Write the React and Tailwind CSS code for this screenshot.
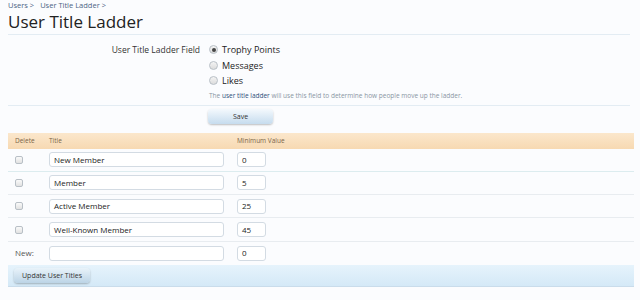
import React from "react";

const rows = [
  { title: "New Member", min: "0" },
  { title: "Member", min: "5" },
  { title: "Active Member", min: "25" },
  { title: "Well-Known Member", min: "45" },
];

function Radio({ checked, label }) {
  return (
    <label className="flex items-center gap-[4px] h-[15.5px] text-[9px] text-[#222]">
      <span className="w-[9px] h-[9px] rounded-full border border-[#b8bfc6] bg-gradient-to-b from-[#f4f4f4] to-[#dcdcdc] flex items-center justify-center">
        {checked && <span className="w-[4px] h-[4px] rounded-full bg-[#444]" />}
      </span>
      {label}
    </label>
  );
}

function Check() {
  return (
    <span className="block w-[8px] h-[8px] rounded-[2px] border border-[#b8bfc6] bg-gradient-to-b from-[#fafafa] to-[#e2e2e2]" />
  );
}

function Field({ value, className }) {
  return (
    <div
      className={`h-[15px] bg-white border border-[#d3dbe3] rounded-[3px] flex items-center px-[4px] text-[8px] text-[#222] ${className}`}
    >
      {value}
    </div>
  );
}

export default function App() {
  return (
    <div
      className="w-[640px] h-[300px] bg-[#fbfcfe] px-2 overflow-hidden"
      style={{ fontFamily: '"Open Sans", "DejaVu Sans", sans-serif' }}
    >
      {/* Breadcrumb */}
      <div className="flex gap-[6px] text-[7.5px] text-[#4c6485] h-[10px] leading-[10px]">
        <span>Users &gt;</span>
        <span>User Title Ladder &gt;</span>
      </div>

      {/* Title */}
      <h1 className="text-[17px] leading-[22px] text-[#222] pt-[1px] h-[24px]">User Title Ladder</h1>

      <div className="mr-[2px] border-b border-[#e3ecf3]" />

      {/* Form */}
      <div className="flex pt-[7px]">
        <div className="w-[192px] text-right text-[8.5px] text-[#333] pt-[3px] leading-[10px]">
          User Title Ladder Field
        </div>
        <div className="pl-[9px]">
          <Radio checked label="Trophy Points" />
          <Radio label="Messages" />
          <Radio label="Likes" />
          <p className="text-[6.5px] text-[#8a96a3] pt-[2px] leading-[10px]">
            The <span className="text-[#2d4f7a]">user title ladder</span> will use this field to determine how people move up the ladder.
          </p>
        </div>
      </div>

      <div className="mt-[4px] mr-[2px] border-b border-[#e3ecf3]" />

      <div className="flex pl-[200px] pt-[3px]">
        <button className="w-[65px] h-[15px] rounded-[4px] bg-gradient-to-b from-[#f4f9fd] to-[#c6dcee] shadow-[0_1px_2px_rgba(0,0,0,0.25)] text-[7px] leading-[15px] text-[#333]">
          Save
        </button>
      </div>

      {/* Table */}
      <div className="mt-[9px] w-[626px]">
        <div className="grid grid-cols-[41px_188px_1fr] h-[16px] items-center bg-gradient-to-b from-[#fbe7cc] to-[#f7d9b2] text-[6.5px] text-[#7a6548]">
          <span className="pl-[7px]">Delete</span>
          <span>Title</span>
          <span>Minimum Value</span>
        </div>
        {rows.map((r, i) => (
          <div
            key={r.title}
            className={`grid grid-cols-[41px_188px_1fr] h-[23.3px] items-center border-b ${i === 0 ? "border-[#dcecef]" : "border-[#e8ecf0]"}`}
          >
            <div className="pl-[7px]">
              <Check />
            </div>
            <Field value={r.title} className="w-[175px]" />
            <Field value={r.min} className="w-[29px]" />
          </div>
        ))}
        <div className="grid grid-cols-[41px_188px_1fr] h-[23.3px] items-center">
          <span className="pl-[7px] text-[8px] text-[#555]">New:</span>
          <Field value="" className="w-[175px]" />
          <Field value="0" className="w-[29px]" />
        </div>
        <div className="h-[22px] flex items-center px-[6px] bg-gradient-to-b from-[#e6f3fc] to-[#d4e9f7] border-b border-[#c9dceb]">
          <button className="h-[15px] px-[8px] rounded-[4px] bg-gradient-to-b from-[#e9f3fa] to-[#bcd4e6] shadow-[0_1px_2px_rgba(0,0,0,0.25)] text-[7px] leading-[15px] text-[#333]">
            Update User Titles
          </button>
        </div>
      </div>
    </div>
  );
}
